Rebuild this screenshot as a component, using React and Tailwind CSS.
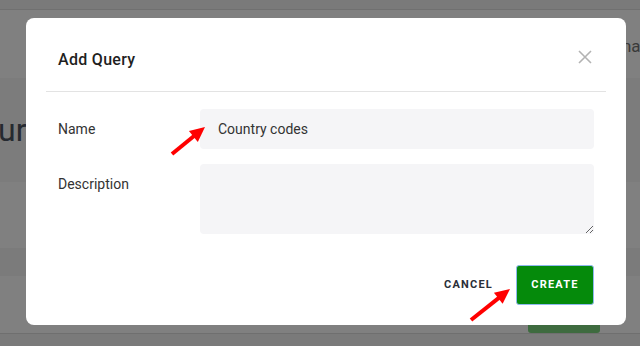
import React from "react";

function Arrow({ x1, y1, x2, y2 }) {
  // red annotation arrow, tip at (x2, y2)
  const dx = x2 - x1;
  const dy = y2 - y1;
  const len = Math.hypot(dx, dy);
  const ux = dx / len;
  const uy = dy / len;
  const head = 15;
  const half = 7;
  const bx = x2 - ux * head;
  const by = y2 - uy * head;
  const points = `${x2},${y2} ${bx - uy * half},${by + ux * half} ${bx + uy * half},${by - ux * half}`;
  return (
    <g>
      <line x1={x1} y1={y1} x2={bx + ux * 2} y2={by + uy * 2} stroke="#ff0000" strokeWidth="4" />
      <polygon points={points} fill="#ff0000" />
    </g>
  );
}

function BackgroundPage() {
  return (
    <div className="flex h-full flex-col bg-[#808080]">
      <div className="h-[10px] border-b border-[#707070] bg-[#7a7a7a]" />
      <div className="flex h-[68px] items-start justify-end">
        <span className="mt-[24px] mr-[-10px] text-[17px] text-[#3a3a3a]">man</span>
      </div>
      <div className="flex h-[104px] items-center bg-[#7c7c7c]">
        <span className="ml-[-2px] text-[32px] text-[#262a30]">ur</span>
      </div>
      <div className="h-[66px]" />
      <div className="h-[28px] bg-[#7b7b7b]" />
      <div className="flex h-[57px] items-end justify-end pr-[40px]">
        <div className="h-[24px] w-[72px] rounded-b-[3px] bg-[#3e6b3f]" />
      </div>
      <div className="flex-1 border-t border-[#6f6f6f] bg-[#7a7a7a]" />
    </div>
  );
}

export default function App() {
  return (
    <div
      className="relative h-[346px] w-[640px] overflow-hidden"
      style={{ fontFamily: "Roboto, 'Liberation Sans', sans-serif" }}
    >
      <BackgroundPage />

      <div className="absolute inset-0 pt-[18px] pl-[26px]">
        <div className="flex h-[307px] w-[600px] flex-col rounded-[8px] bg-white">
          <div className="mx-[20px] flex h-[74px] items-center justify-between border-b border-[#e3e3e3] pl-[12px] pr-[12px]">
            <h2 className="mt-[10px] text-[16px] font-medium tracking-[0.3px] text-[#1f1f1f]">Add Query</h2>
            <svg width="14" height="14" viewBox="0 0 14 14" className="mt-[4px] mr-[2px]">
              <path d="M1 1 L13 13 M13 1 L1 13" stroke="#b3b3b3" strokeWidth="1.6" fill="none" />
            </svg>
          </div>

          <div className="flex flex-col gap-[15px] px-[32px] pt-[17px]">
            <div className="flex">
              <label className="w-[142px] pt-[10px] text-[14px] text-[#333]">Name</label>
              <div className="flex h-[40px] flex-1 items-center rounded-[4px] bg-[#f5f5f7] px-[18px] text-[14px] text-[#333]">
                Country codes
              </div>
            </div>
            <div className="flex">
              <label className="w-[142px] pt-[10px] text-[14px] text-[#333]">Description</label>
              <textarea
                className="h-[70px] flex-1 rounded-[4px] bg-[#f5f5f7] px-[18px] py-[10px] text-[14px] text-[#333] outline-none"
                defaultValue=""
              />
            </div>
          </div>

          <div className="mt-auto flex items-center justify-end gap-[8px] px-[32px] pb-[20px]">
            <button className="px-[15px] text-[11px] font-bold tracking-[1.2px] text-[#2b2f38]">CANCEL</button>
            <button className="h-[40px] w-[78px] rounded-[3px] border border-[#8fb8ee] bg-[#058a0b] text-[11px] font-bold tracking-[1.2px] text-white">
              CREATE
            </button>
          </div>
        </div>
      </div>

      <svg className="pointer-events-none absolute inset-0" width="640" height="346">
        <Arrow x1={172} y1={154} x2={205} y2={127} />
        <Arrow x1={471} y1={320} x2={510} y2={289} />
      </svg>
    </div>
  );
}
